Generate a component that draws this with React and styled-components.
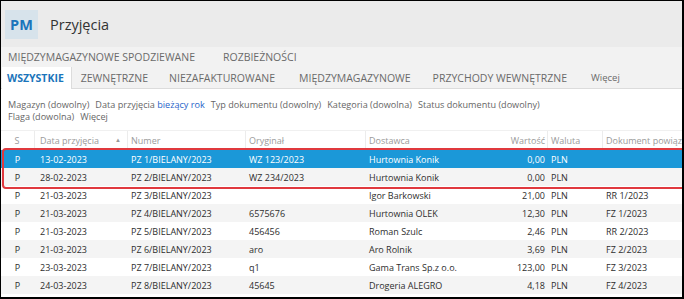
import styled, { createGlobalStyle } from "styled-components";

const Global = createGlobalStyle`
  body {
    margin: 0;
    font-family: "Open Sans", "Liberation Sans", sans-serif;
    background: #fff;
  }
`;

const Frame = styled.div`
  position: relative;
  width: 684px;
  height: 299px;
  box-sizing: border-box;
  border-style: solid;
  border-color: #000;
  border-width: 1px 2px 2px 1px;
  overflow: hidden;
  background: #fff;
`;

const TopBar = styled.div`
  display: flex;
  align-items: center;
  height: 46px;
  background: #ebebeb;
  padding-left: 4px;
`;

const Badge = styled.div`
  width: 33px;
  height: 29px;
  display: flex;
  align-items: center;
  justify-content: center;
  background: #d7e3eb;
  color: #1b75bb;
  font-weight: 700;
  font-size: 14.5px;
`;

const Title = styled.div`
  margin-left: 12px;
  font-size: 14.5px;
  color: #333;
`;

const Tabs = styled.div`
  background: #f2f2f2;
  border-bottom: 1px solid #dcdcdc;
  height: 41px;
  display: flex;
  flex-direction: column;
`;

const TabRow = styled.div`
  display: flex;
  align-items: stretch;
  height: ${(p) => p.$h}px;
  padding-left: 1px;
`;

const Tab = styled.div`
  display: flex;
  align-items: center;
  padding: ${(p) => (p.$active ? "0 7px 0 5px" : "0")};
  margin-left: ${(p) => p.$ml || 0}px;
  font-size: ${(p) => (p.$small ? 9.5 : 10.5)}px;
  color: ${(p) => (p.$active ? "#1b75bb" : "#6a6a6a")};
  font-weight: ${(p) => (p.$active ? 700 : 400)};
  background: ${(p) => (p.$active ? "#fff" : "transparent")};
  border-right: ${(p) => (p.$active ? "1px solid #dcdcdc" : "none")};
  margin-bottom: ${(p) => (p.$active ? "-1px" : "0")};
  white-space: nowrap;
`;

const Filters = styled.div`
  padding: 10px 0 0 7px;
  height: 31px;
  font-size: 9.1px;
  line-height: 12px;
  color: #666;
`;

const Filter = styled.span`
  margin-right: 6px;
`;

const Link = styled.span`
  color: #2563c9;
`;

const Table = styled.div`
  display: flex;
  flex-direction: column;
  font-size: 9px;
`;

const cols = "33px 93px 118px 120px 125px 57px 55px 1fr";

const HeadRow = styled.div`
  display: grid;
  grid-template-columns: ${cols};
  height: 18px;
  border-top: 1px solid #f0f0f0;
  color: #9a9a9a;
  margin-bottom: 1px;
`;

const HeadCell = styled.div`
  display: flex;
  align-items: center;
  justify-content: ${(p) => (p.$right ? "flex-end" : p.$center ? "center" : "flex-start")};
  padding: 0 ${(p) => (p.$right ? 2 : p.$wide ? 6 : 4)}px 0 ${(p) => (p.$wide ? 5 : 3)}px;
  border-left: ${(p) => (p.$sep ? "1px solid #ececec" : "none")};
  white-space: nowrap;
  overflow: hidden;
`;

const SortArrow = styled.span`
  margin-left: auto;
  font-size: 6px;
  color: #999;
`;

const Row = styled.div`
  display: grid;
  grid-template-columns: ${cols};
  height: 18px;
  color: ${(p) => (p.$sel ? "#fff" : "#2e2e2e")};
  background: ${(p) => (p.$sel ? "#1b98d8" : p.$alt ? "#f4f4f4" : "#fff")};
`;

const Cell = styled.div`
  display: flex;
  align-items: center;
  justify-content: ${(p) => (p.$right ? "flex-end" : p.$center ? "center" : "flex-start")};
  padding: 0 ${(p) => (p.$right ? 2 : 4)}px 0 ${(p) => (p.$wide ? 6 : 4)}px;
  white-space: nowrap;
  overflow: hidden;
`;

const Highlight = styled.div`
  position: absolute;
  left: 1px;
  top: 147px;
  width: 679px;
  height: 37px;
  border: 2px solid #e0393e;
  border-radius: 4px;
  pointer-events: none;
`;

const rows = [
  ["13-02-2023", "PZ 1/BIELANY/2023", "WZ 123/2023", "Hurtownia Konik", "0,00", ""],
  ["28-02-2023", "PZ 2/BIELANY/2023", "WZ 234/2023", "Hurtownia Konik", "0,00", ""],
  ["21-03-2023", "PZ 3/BIELANY/2023", "", "Igor Barkowski", "21,00", "RR 1/2023"],
  ["21-03-2023", "PZ 4/BIELANY/2023", "6575676", "Hurtownia OLEK", "12,30", "FZ 1/2023"],
  ["21-03-2023", "PZ 5/BIELANY/2023", "456456", "Roman Szulc", "2,46", "RR 2/2023"],
  ["21-03-2023", "PZ 6/BIELANY/2023", "aro", "Aro Rolnik", "3,69", "FZ 2/2023"],
  ["23-03-2023", "PZ 7/BIELANY/2023", "q1", "Gama Trans Sp.z o.o.", "123,00", "FZ 3/2023"],
  ["24-03-2023", "PZ 8/BIELANY/2023", "45645", "Drogeria ALEGRO", "4,18", "FZ 4/2023"],
];

export default function App() {
  return (
    <Frame>
      <Global />
      <TopBar>
        <Badge>PM</Badge>
        <Title>Przyjęcia</Title>
      </TopBar>
      <Tabs>
        <TabRow $h={20}>
          <Tab $ml={6}>MIĘDZYMAGAZYNOWE SPODZIEWANE</Tab>
          <Tab $ml={28}>ROZBIEŻNOŚCI</Tab>
        </TabRow>
        <TabRow $h={21}>
          <Tab $active>WSZYSTKIE</Tab>
          <Tab $ml={9}>ZEWNĘTRZNE</Tab>
          <Tab $ml={21}>NIEZAFAKTUROWANE</Tab>
          <Tab $ml={24}>MIĘDZYMAGAZYNOWE</Tab>
          <Tab $ml={22}>PRZYCHODY WEWNĘTRZNE</Tab>
          <Tab $ml={24} $small>
            Więcej
          </Tab>
        </TabRow>
      </Tabs>
      <Filters>
        <div>
          <Filter>Magazyn (dowolny)</Filter>
          <Filter>
            Data przyjęcia <Link>bieżący rok</Link>
          </Filter>
          <Filter>Typ dokumentu (dowolny)</Filter>
          <Filter>Kategoria (dowolna)</Filter>
          <Filter>Status dokumentu (dowolny)</Filter>
        </div>
        <div>
          <Filter>Flaga (dowolna)</Filter>
          <Filter>Więcej</Filter>
        </div>
      </Filters>
      <Table>
        <HeadRow>
          <HeadCell $center>S</HeadCell>
          <HeadCell $sep $wide>
            Data przyjęcia <SortArrow>▲</SortArrow>
          </HeadCell>
          <HeadCell $sep>Numer</HeadCell>
          <HeadCell $sep>Oryginał</HeadCell>
          <HeadCell $sep>Dostawca</HeadCell>
          <HeadCell $right>Wartość</HeadCell>
          <HeadCell $sep>Waluta</HeadCell>
          <HeadCell $sep>Dokument powiąz.</HeadCell>
        </HeadRow>
        {rows.map((r, i) => (
          <Row key={i} $sel={i === 0} $alt={i % 2 === 1}>
            <Cell $center>P</Cell>
            <Cell $wide>{r[0]}</Cell>
            <Cell>{r[1]}</Cell>
            <Cell>{r[2]}</Cell>
            <Cell>{r[3]}</Cell>
            <Cell $right>{r[4]}</Cell>
            <Cell>PLN</Cell>
            <Cell>{r[5]}</Cell>
          </Row>
        ))}
      </Table>
      <Highlight />
    </Frame>
  );
}
